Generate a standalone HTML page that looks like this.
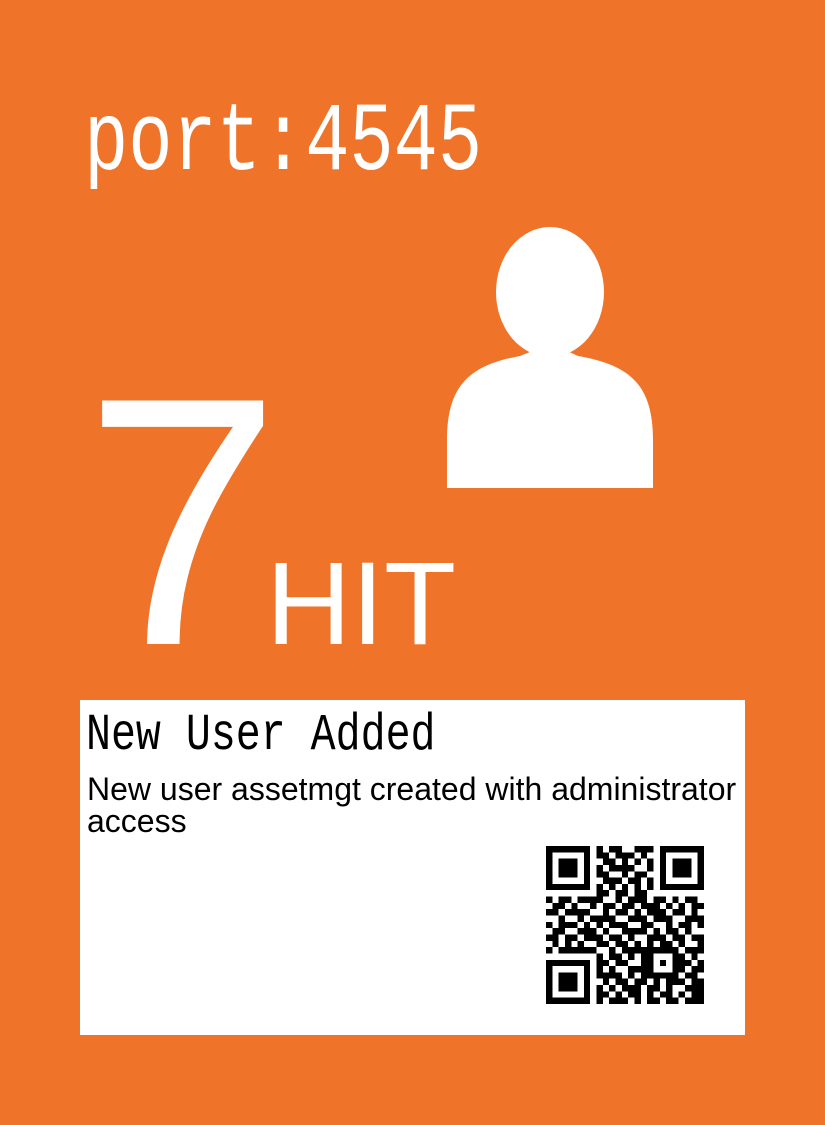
<!DOCTYPE html>
<html><head><meta charset="utf-8"><style>
html,body{margin:0;padding:0}
body{width:825px;height:1125px;background:#ef7329;position:relative;overflow:hidden;font-family:"Liberation Sans",sans-serif}
.port{position:absolute;left:84px;top:96px;font-family:"Liberation Mono",monospace;font-size:97px;color:#fff;transform:scaleX(0.76);transform-origin:0 0;line-height:1;font-weight:normal}
.seven{position:absolute;left:84px;top:346px;font-size:354px;color:#fff;line-height:1}
.hit{position:absolute;left:266px;top:545px;font-size:118px;color:#fff;line-height:1}
.box{position:absolute;left:80px;top:700px;width:665px;height:335px;background:#fff}
.title{position:absolute;left:6px;top:10px;font-family:"Liberation Mono",monospace;font-size:52px;line-height:1;transform:scaleX(0.8);transform-origin:0 0;color:#000}
.desc{position:absolute;left:7px;top:73px;font-size:32px;line-height:32px;color:#000;width:720px;white-space:nowrap}
svg{position:absolute}
</style></head><body>
<div class="port">port:4545</div>
<svg style="left:440px;top:220px" width="220" height="275" viewBox="440 220 220 275">
<ellipse cx="550" cy="292" rx="54" ry="65" fill="#fff"/>
<path d="M447 488 L447 440 C447 385 470 365 520 356 L535 350 L565 350 L578 356 C630 365 653 385 653 440 L653 488 Z" fill="#fff"/>
</svg>
<div class="seven">7</div>
<div class="hit">HIT</div>
<div class="box">
<div class="title">New User Added</div>
<div class="desc">New user assetmgt created with administrator<br>access</div>
<svg style="left:466px;top:146px" width="158" height="158" viewBox="0 0 25 25" shape-rendering="crispEdges" id="qr"></svg>
</div>
<script>
var rows=[
"1111111010110011101111111",
"1000001011011101001000001",
"1011101001101010101011101",
"1011101010111100101011101",
"1011101011001011001011101",
"1000001001110110101000001",
"1111111010101010101111111",
"0000000011011011000000000",
"1011011110010111011010110",
"0110100101101101110101011",
"1101111001011010111011010",
"0010010111100111011100111",
"1011101010111001100101101",
"0110011101001111010110100",
"1101101110110100111011011",
"0101010011011010101101001",
"1011111100101111111110111",
"0000000010110101100011010",
"1111111011011001101011101",
"1000001010100111100011011",
"1011101011110101111110110",
"1011101001011011010111011",
"1011101010101110110100111",
"1000001011010110101101011",
"1111111010111010110110111"];
var s='';for(var y=0;y<25;y++)for(var x=0;x<25;x++)if(rows[y][x]=='1')s+='<rect x="'+x+'" y="'+y+'" width="1" height="1"/>';
document.getElementById('qr').innerHTML=s;
</script>
</body></html>
